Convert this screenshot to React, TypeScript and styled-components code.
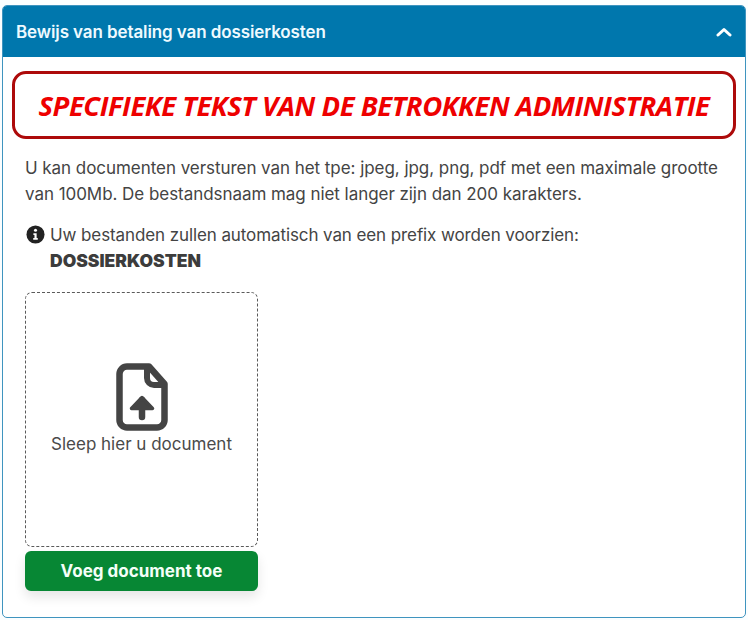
import React from "react";
import styled, { createGlobalStyle } from "styled-components";

const GlobalStyle = createGlobalStyle`
  html, body {
    margin: 0;
    padding: 0;
    background: #ffffff;
  }
  body {
    font-family: "Inter", "Liberation Sans", sans-serif;
    color: #3c3c3c;
  }
`;

const Page = styled.div`
  width: 748px;
  height: 620px;
  padding: 5px 2px 2px;
  box-sizing: border-box;
  background: #fbfeff;
`;

const Panel = styled.section`
  height: 100%;
  box-sizing: border-box;
  display: flex;
  flex-direction: column;
  background: #ffffff;
  border: 1.5px solid #3f94bf;
  border-radius: 5px;
  overflow: hidden;
`;

const Header = styled.header`
  height: 51px;
  flex: none;
  display: flex;
  align-items: center;
  justify-content: space-between;
  padding: 0 13px 0 13px;
  background: #0077ad;
`;

const HeaderTitle = styled.h2`
  margin: 0;
  font-size: 17px;
  font-weight: 600;
  letter-spacing: -0.1px;
  color: #eefaff;
`;

const Chevron = styled.svg`
  width: 16px;
  height: 10px;
  fill: none;
  stroke: #ffffff;
  stroke-width: 3;
  stroke-linecap: round;
  stroke-linejoin: round;
`;

const Body = styled.div`
  flex: 1;
  display: flex;
  flex-direction: column;
  padding: 14px 9px 0 9px;
`;

const Notice = styled.div`
  height: 68px;
  box-sizing: border-box;
  display: flex;
  align-items: center;
  justify-content: center;
  border: 3px solid #ad0a0a;
  border-radius: 14px;
  font-family: "Open Sans", "Liberation Sans", sans-serif;
  font-size: 27.5px;
  font-style: italic;
  font-weight: 700;
  letter-spacing: -0.48px;
  color: #ee0000;
  white-space: nowrap;
`;

const Content = styled.div`
  padding: 0 0 0 13px;
`;

const Intro = styled.p`
  margin: 16px 0 0;
  width: 700px;
  font-size: 17px;
  line-height: 26px;
  letter-spacing: -0.05px;
  color: #444444;
`;

const InfoRow = styled.div`
  margin-top: 15px;
  display: flex;
  gap: 5px;
  font-size: 17px;
  line-height: 26px;
  letter-spacing: -0.1px;
  color: #444444;
`;

const InfoIcon = styled.svg`
  width: 19px;
  height: 19px;
  margin: 3px 0 0 1px;
  flex: none;
`;

const Prefix = styled.strong`
  display: block;
  font-weight: 900;
  font-size: 17.5px;
  letter-spacing: 0;
  color: #3c3c3c;
`;

const UploadColumn = styled.div`
  margin-top: 18px;
  width: 233px;
  display: flex;
  flex-direction: column;
  gap: 4px;
`;

const DropArea = styled.div`
  height: 255px;
  box-sizing: border-box;
  display: flex;
  flex-direction: column;
  align-items: center;
  padding-top: 70px;
  border: 1.6px dashed #5a5a5a;
  border-radius: 7px;
`;

const FileIcon = styled.svg`
  width: 52px;
  height: 68px;
  fill: none;
  stroke: #444444;
`;

const DropText = styled.span`
  font-size: 17px;
  line-height: 26px;
  color: #4a4a4a;
`;

const AddButton = styled.button`
  height: 40px;
  border: none;
  border-radius: 6px;
  background: #078734;
  box-shadow: 0 6px 12px rgba(0, 0, 0, 0.1);
  font-family: inherit;
  font-size: 17px;
  font-weight: 700;
  color: #f4fff8;
`;

export default function App() {
  return (
    <Page>
      <GlobalStyle />
      <Panel>
        <Header>
          <HeaderTitle>Bewijs van betaling van dossierkosten</HeaderTitle>
          <Chevron viewBox="0 0 16 10">
            <path d="M2 8 L8 2.5 L14 8" />
          </Chevron>
        </Header>
        <Body>
          <Notice>SPECIFIEKE TEKST VAN DE BETROKKEN ADMINISTRATIE</Notice>
          <Content>
            <Intro>
              U kan documenten versturen van het tpe: jpeg, jpg, png, pdf met een maximale grootte
              van 100Mb. De bestandsnaam mag niet langer zijn dan 200 karakters.
            </Intro>
            <InfoRow>
              <InfoIcon viewBox="0 0 20 20">
                <circle cx="10" cy="10" r="9.5" fill="#222222" />
                <circle cx="10" cy="5.6" r="1.6" fill="#ffffff" />
                <path d="M7.8 8.6h3.4v5.2h1.2v1.8H7.6v-1.8h1.3v-3.4H7.8z" fill="#ffffff" />
              </InfoIcon>
              <div>
                Uw bestanden zullen automatisch van een prefix worden voorzien:
                <Prefix>DOSSIERKOSTEN</Prefix>
              </div>
            </InfoRow>
            <UploadColumn>
              <DropArea>
                <FileIcon viewBox="0 0 52 68">
                  <path
                    d="M33 3.5H11A7.5 7.5 0 0 0 3.5 11v46a7.5 7.5 0 0 0 7.5 7.5h30a7.5 7.5 0 0 0 7.5-7.5V21z"
                    strokeWidth="6.5"
                    strokeLinejoin="round"
                  />
                  <path
                    d="M31 4v11a7 7 0 0 0 7 7h11"
                    strokeWidth="6"
                    strokeLinejoin="round"
                  />
                  <path d="M26 54V37" strokeWidth="6.5" strokeLinecap="round" />
                  <path d="M15.5 45.5L26 34.5L36.5 45.5z" fill="#444444" strokeWidth="3.5" strokeLinejoin="round" />
                </FileIcon>
                <DropText>Sleep hier u document</DropText>
              </DropArea>
              <AddButton>Voeg document toe</AddButton>
            </UploadColumn>
          </Content>
        </Body>
      </Panel>
    </Page>
  );
}
